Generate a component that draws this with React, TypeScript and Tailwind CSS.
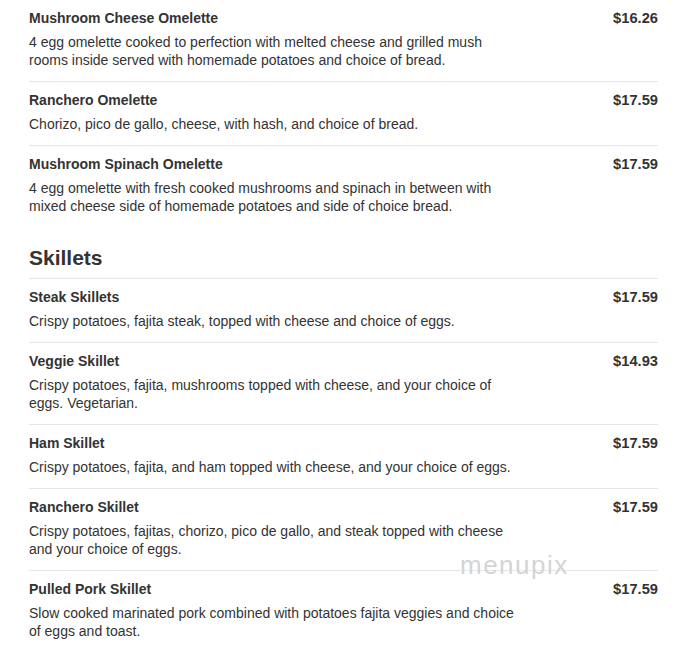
import React from "react";

interface Item {
  name: string;
  price: string;
  desc: string;
}

const omelettes: Item[] = [
  {
    name: "Mushroom Cheese Omelette",
    price: "$16.26",
    desc: "4 egg omelette cooked to perfection with melted cheese and grilled mush rooms inside served with homemade potatoes and choice of bread.",
  },
  {
    name: "Ranchero Omelette",
    price: "$17.59",
    desc: "Chorizo, pico de gallo, cheese, with hash, and choice of bread.",
  },
  {
    name: "Mushroom Spinach Omelette",
    price: "$17.59",
    desc: "4 egg omelette with fresh cooked mushrooms and spinach in between with mixed cheese side of homemade potatoes and side of choice bread.",
  },
];

const skillets: Item[] = [
  {
    name: "Steak Skillets",
    price: "$17.59",
    desc: "Crispy potatoes, fajita steak, topped with cheese and choice of eggs.",
  },
  {
    name: "Veggie Skillet",
    price: "$14.93",
    desc: "Crispy potatoes, fajita, mushrooms topped with cheese, and your choice of eggs. Vegetarian.",
  },
  {
    name: "Ham Skillet",
    price: "$17.59",
    desc: "Crispy potatoes, fajita, and ham topped with cheese, and your choice of eggs.",
  },
  {
    name: "Ranchero Skillet",
    price: "$17.59",
    desc: "Crispy potatoes, fajitas, chorizo, pico de gallo, and steak topped with cheese and your choice of eggs.",
  },
  {
    name: "Pulled Pork Skillet",
    price: "$17.59",
    desc: "Slow cooked marinated pork combined with potatoes fajita veggies and choice of eggs and toast.",
  },
];

const MenuRow: React.FC<{ item: Item; last?: boolean }> = ({ item, last }) => (
  <div className={`pt-[9px] pb-[12px] ${last ? "" : "border-b border-[#e6e6e6]"}`}>
    <div className="flex items-start justify-between">
      <div className="w-[490px]">
        <div className="text-[14px] leading-[18px] font-bold text-[#333]">{item.name}</div>
        <div className="mt-[6px] text-[14px] leading-[18px] text-[#333]">{item.desc}</div>
      </div>
      <div className="text-[14.7px] leading-[18px] font-bold text-[#333]">{item.price}</div>
    </div>
  </div>
);

export default function App() {
  return (
    <div
      className="relative min-h-[647px] w-[693px] bg-white"
      style={{ fontFamily: '"Liberation Sans", Arial, sans-serif' }}
    >
      <div className="ml-[29px] w-[629px]">
        {omelettes.map((item, i) => (
          <MenuRow key={item.name} item={item} last={i === omelettes.length - 1} />
        ))}
        <div className="mt-[19px] border-b border-[#e6e6e6] pb-[8px] text-[21px] leading-[24px] font-bold text-[#333]">
          Skillets
        </div>
        {skillets.map((item, i) => (
          <MenuRow key={item.name} item={item} last={i === skillets.length - 1} />
        ))}
      </div>
      <div className="pointer-events-none absolute left-[460px] top-[550px] text-[26px] leading-[30px] font-light tracking-[1.5px] text-[#d4d4d4]">
        menupix
      </div>
    </div>
  );
}
